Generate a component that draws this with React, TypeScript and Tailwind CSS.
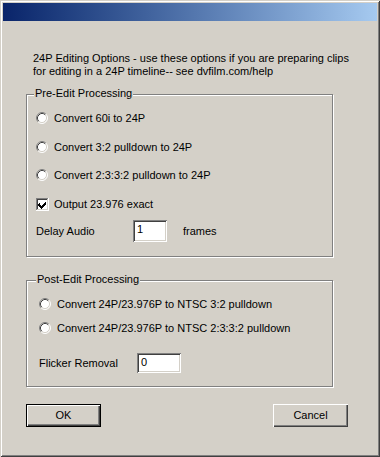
import React from "react";

const bevelSunken =
  "shadow-[inset_1px_1px_0_#808080,inset_-1px_-1px_0_#ffffff,inset_2px_2px_0_#404040,inset_-2px_-2px_0_#d4d0c8]";

function Radio() {
  return (
    <svg width="12" height="12" viewBox="0 0 12 12" className="shrink-0">
      <circle cx="6" cy="6" r="5" fill="#ffffff" />
      <path d="M2.11 9.89 A5.5 5.5 0 0 1 9.89 2.11" stroke="#808080" strokeWidth="1" fill="none" />
      <path d="M2.82 9.18 A4.5 4.5 0 0 1 9.18 2.82" stroke="#404040" strokeWidth="1" fill="none" />
      <path d="M9.89 2.11 A5.5 5.5 0 0 1 2.11 9.89" stroke="#ffffff" strokeWidth="1" fill="none" />
      <path d="M9.18 2.82 A4.5 4.5 0 0 1 2.82 9.18" stroke="#d4d0c8" strokeWidth="1" fill="none" />
    </svg>
  );
}

function Checkbox() {
  return (
    <svg width="13" height="13" viewBox="0 0 13 13" className="shrink-0" shapeRendering="crispEdges">
      <rect x="0" y="0" width="13" height="13" fill="#ffffff" />
      <rect x="0" y="0" width="12" height="1" fill="#808080" />
      <rect x="0" y="0" width="1" height="12" fill="#808080" />
      <rect x="1" y="1" width="10" height="1" fill="#404040" />
      <rect x="1" y="1" width="1" height="10" fill="#404040" />
      <rect x="1" y="11" width="11" height="1" fill="#d4d0c8" />
      <rect x="11" y="1" width="1" height="11" fill="#d4d0c8" />
      <path d="M3 5 h1 v2 h1 v1 h1 v-1 h1 v-1 h1 v-1 h1 v-1 h1 v3 h-1 v1 h-1 v1 h-1 v1 h-1 v1 h-1 v-1 h-1 v-1 h-1 v-1 h-1 z" fill="#000000" />
    </svg>
  );
}

function GroupBox({
  label,
  labelLeft,
  className,
  children,
}: {
  label: string;
  labelLeft: string;
  className: string;
  children: React.ReactNode;
}) {
  return (
    <div
      className={`relative w-[307px] border border-[#808080] shadow-[1px_1px_0_#ffffff,inset_1px_1px_0_#ffffff] ${className}`}
    >
      <span className={`absolute top-[-8px] ${labelLeft} bg-[#d4d0c8] px-[1px] leading-[13px]`}>
        {label}
      </span>
      {children}
    </div>
  );
}

export default function App() {
  return (
    <div
      className="w-[380px] h-[457px] bg-[#d4d0c8] p-[3px] text-[11px] text-black shadow-[inset_1px_1px_0_#d4d0c8,inset_-1px_-1px_0_#404040,inset_2px_2px_0_#ffffff,inset_-2px_-2px_0_#808080] overflow-hidden"
      style={{ fontFamily: '"Liberation Sans", Arial, sans-serif' }}
    >
      <div className="h-[18px] w-full bg-gradient-to-r from-[#0a246a] to-[#a6caf0]" />
      <div className="pl-[23px] flex flex-col">
        <div className="mt-[31px] pl-[7px] leading-[13px]">
          <div>24P Editing Options - use these options if you are preparing clips</div>
          <div>for editing in a 24P timeline-- see dvfilm.com/help</div>
        </div>

        <GroupBox label="Pre-Edit Processing" labelLeft="left-[7px]" className="mt-[16px] h-[163px] pt-[13px] pl-[9px]">
          <div className="flex flex-col">
            <div className="h-[20px] flex items-center gap-[6px]">
              <Radio />
              <span>Convert 60i to 24P</span>
            </div>
            <div className="h-[20px] mt-[9px] flex items-center gap-[6px]">
              <Radio />
              <span>Convert 3:2 pulldown to 24P</span>
            </div>
            <div className="h-[20px] mt-[8px] flex items-center gap-[6px]">
              <Radio />
              <span>Convert 2:3:3:2 pulldown to 24P</span>
            </div>
            <div className="h-[20px] mt-[9px] flex items-center gap-[5px]">
              <Checkbox />
              <span>Output 23.976 exact</span>
            </div>
            <div className="h-[22px] mt-[6px] flex items-center">
              <span className="w-[97px]">Delay Audio</span>
              <div className={`w-[34px] h-[22px] bg-white ${bevelSunken} pl-[4px] pt-[3px] leading-[13px]`}>1</div>
              <span className="ml-[16px]">frames</span>
            </div>
          </div>
        </GroupBox>

        <GroupBox label="Post-Edit Processing" labelLeft="left-[9px]" className="mt-[23px] h-[107px] pt-[13px] pl-[12px]">
          <div className="flex flex-col">
            <div className="h-[20px] flex items-center gap-[6px]">
              <Radio />
              <span>Convert 24P/23.976P to NTSC 3:2 pulldown</span>
            </div>
            <div className="h-[20px] mt-[4px] flex items-center gap-[6px]">
              <Radio />
              <span>Convert 24P/23.976P to NTSC 2:3:3:2 pulldown</span>
            </div>
            <div className="h-[20px] mt-[15px] flex items-center">
              <span className="w-[98px]">Flicker Removal</span>
              <div className={`w-[44px] h-[20px] bg-white ${bevelSunken} pl-[4px] pt-[3px] leading-[13px]`}>0</div>
            </div>
          </div>
        </GroupBox>

        <div className="mt-[17px] w-[322px] flex justify-between">
          <button className="w-[75px] h-[23px] bg-[#d4d0c8] border border-black shadow-[inset_1px_1px_0_#ffffff,inset_-1px_-1px_0_#404040,inset_-2px_-2px_0_#808080] leading-[13px]">
            OK
          </button>
          <button className="w-[75px] h-[23px] bg-[#d4d0c8] shadow-[inset_1px_1px_0_#ffffff,inset_-1px_-1px_0_#404040,inset_-2px_-2px_0_#808080] leading-[13px]">
            Cancel
          </button>
        </div>
      </div>
    </div>
  );
}
